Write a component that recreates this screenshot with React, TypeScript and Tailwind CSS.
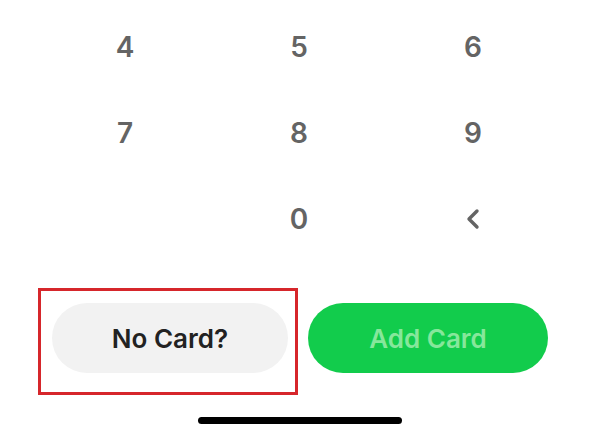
import React from 'react';

const keys = ['4', '5', '6', '7', '8', '9', '', '0', 'back'];

const BackIcon = () => (
  <svg width="16" height="24" viewBox="0 0 16 24" fill="none">
    <polyline points="12,4 4,12 12,20" stroke="#646464" strokeWidth="3.4" strokeLinecap="round" strokeLinejoin="round" />
  </svg>
);

const App: React.FC = () => (
  <div className="w-[589px] h-[442px] bg-white overflow-hidden font-['Inter',sans-serif]">
    {/* keypad */}
    <div className="grid grid-cols-3 ml-[38px] w-[522px] pt-[4px]">
      {keys.map((k, i) => (
        <div key={i} className="h-[86px] flex items-center justify-center text-[28px] font-semibold text-[#646464]">
          {k === 'back' ? <BackIcon /> : k}
        </div>
      ))}
    </div>

    {/* actions */}
    <div className="flex gap-[20px] pl-[52px] mt-[41px]">
      <div className="relative">
        <button className="w-[236px] h-[70px] rounded-full bg-[#f2f2f2] text-[26px] font-semibold text-[#222]">
          No Card?
        </button>
        <div className="absolute -left-[14px] -top-[15px] w-[260px] h-[107px] border-[3px] border-[#d6262b]" />
      </div>
      <button className="w-[240px] h-[70px] rounded-full bg-[#12cc4c] text-[26px] font-semibold text-[#86e79b]">
        Add Card
      </button>
    </div>

    {/* home indicator */}
    <div className="flex justify-center mt-[44px] pl-[10px]">
      <div className="w-[204px] h-[7px] rounded-full bg-black" />
    </div>
  </div>
);

export default App;
